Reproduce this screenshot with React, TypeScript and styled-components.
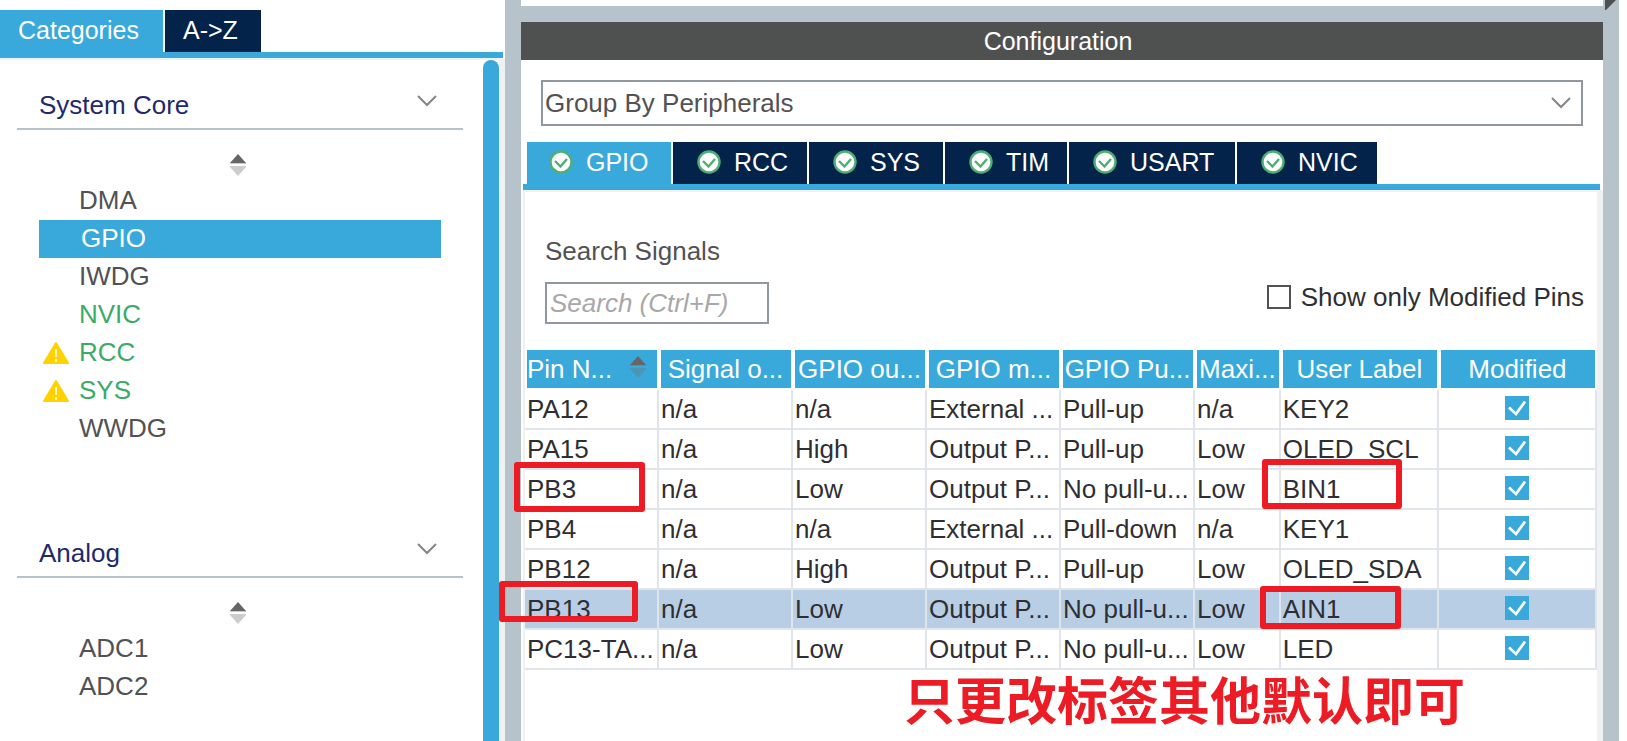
import React from 'react';
import styled, { createGlobalStyle, css } from 'styled-components';

const blue = '#39a9dc';
const navy = '#03234b';
const splitter = '#b7c3ca';
const frame = '#f0f1f2';
const grid = '#e1e4e8';
const red = '#ed1c24';

const Global = createGlobalStyle`
  *, *::before, *::after { box-sizing: border-box; }
  html, body { margin: 0; }
  body, button, input, select {
    font-family: "Liberation Sans", Arial, sans-serif;
    font-size: 26px;
    line-height: 38px;
  }
  button, input, select { margin: 0; padding: 0; border: 0; border-radius: 0; background: none; }
`;

const Window = styled.div`
  display: flex;
  height: 100vh;
  overflow: hidden;
  position: relative;
  background: #fff;
  color: #2f2f33;
`;

const Sidebar = styled.aside`
  flex: 0 0 505px;
  display: flex;
  flex-direction: column;
  padding-top: 10px;
`;

const SideTabs = styled.div`
  display: flex;
  gap: 2px;
  margin-right: 2px;
  border-bottom: 6px solid ${blue};
`;

const Tab = styled.button<{ $active?: boolean; $width: number }>`
  display: flex;
  align-items: center;
  gap: 13px;
  width: ${(p) => p.$width}px;
  height: 42px;
  padding: 0 0 2px 18px;
  color: #fff;
  font-size: 25px;
  background: ${(p) => (p.$active ? blue : navy)};
`;

const PinTab = styled(Tab)`
  padding-left: ${(p) => (p.$active ? 22 : 24)}px;
`;

const SideBody = styled.div`
  flex: 1;
  min-height: 0;
  display: flex;
  border-top: 2px solid ${frame};
  border-right: 6px solid ${frame};
`;

const Tree = styled.div`
  flex: 1;
  padding: 20px 20px 0 17px;
`;

const ScrollThumb = styled.div`
  width: 16px;
  background: ${blue};
  border-radius: 8px 8px 0 0;
`;

const Section = styled.section`
  height: 448px;
`;

const SectionHead = styled.button`
  display: flex;
  justify-content: space-between;
  width: 100%;
  height: 50px;
  padding: 6px 26px 0 22px;
  border-bottom: 2px solid ${splitter};
  color: #1f2a6b;
  line-height: 38px;
  svg { margin-top: 9px; }
`;

const SortButton = styled.button`
  display: flex;
  justify-content: center;
  width: 100%;
  height: 52px;
  padding: 24px 4px 0 0;
`;

const List = styled.ul`
  margin: 0 22px;
  padding: 0;
  list-style: none;
`;

type Tone = 'plain' | 'green' | 'selected';

const Item = styled.li<{ $tone: Tone }>`
  display: flex;
  align-items: center;
  height: 38px;
  padding-bottom: 2px;
  color: #525254;
  ${(p) => p.$tone === 'green' && css`color: #3cab67;`}
  ${(p) => p.$tone === 'selected' && css`color: #fff; background: ${blue}; padding-left: 2px;`}
`;

const ItemIcon = styled.span`
  display: flex;
  flex: 0 0 40px;
  padding: 2px 0 0 4px;
`;

const Splitter = styled.div`
  flex: 0 0 16px;
  background: ${splitter};
`;

const Main = styled.main`
  flex: 1;
  min-width: 0;
  display: flex;
  flex-direction: column;
  border-top: 6px solid #fff;
`;

const Title = styled.h1`
  margin: 0;
  height: 54px;
  border-top: 16px solid ${splitter};
  background: #4f5150;
  color: #fff;
  font-size: 25px;
  font-weight: 400;
  line-height: 38px;
  text-align: center;
  padding-right: 8px;
`;

const GroupBox = styled.div`
  position: relative;
  margin: 20px 20px 16px;
  svg { position: absolute; right: 12px; top: 17px; pointer-events: none; }
`;

const GroupSelect = styled.select`
  appearance: none;
  display: block;
  width: 100%;
  height: 46px;
  padding: 0 2px;
  border: 2px solid #90979d;
  color: #525254;
`;

const PinTabs = styled.div`
  display: flex;
  gap: 2px;
  margin: 0 3px 0 2px;
  padding-left: 4px;
  border-bottom: 6px solid ${blue};
`;

const PinBody = styled.div`
  flex: 1;
  margin-left: 2px;
  border: solid ${frame};
  border-width: 2px 6px 0 2px;
`;

const Filters = styled.div`
  display: flex;
  justify-content: space-between;
  align-items: flex-end;
  padding: 40px 13px 0 20px;
  height: 132px;
  margin-bottom: 26px;
`;

const SearchField = styled.div`
  display: flex;
  flex-direction: column;
  gap: 12px;
  color: #525254;
`;

const SearchInput = styled.input`
  width: 224px;
  height: 42px;
  padding: 0 3px;
  border: 2px solid #90979d;
  color: #525254;
  &::placeholder { color: #a8a8a8; font-style: italic; opacity: 1; }
`;

const CheckLabel = styled.label`
  display: flex;
  align-items: center;
  gap: 10px;
  margin-bottom: 8px;
`;

const Check = styled.input`
  appearance: none;
  flex: none;
  display: block;
  width: 24px;
  height: 24px;
  border: 2px solid #525254;
  &:checked {
    margin: 0 auto;
    border: 0;
    background: ${blue} url("data:image/svg+xml,%3Csvg xmlns='http://www.w3.org/2000/svg' viewBox='0 0 24 24'%3E%3Cpath d='M4 11.5l7 6.5L20 5.5' fill='none' stroke='white' stroke-width='2.8'/%3E%3C/svg%3E");
  }
`;

const PinTable = styled.table`
  width: 100%;
  table-layout: fixed;
  border-collapse: separate;
  border-spacing: 0;
  white-space: nowrap;
`;

const Th = styled.th`
  height: 40px;
  padding: 0 2px 2px;
  font-weight: 400;
  overflow: hidden;
`;

const HeadFill = styled.div<{ $sorted?: boolean }>`
  display: flex;
  align-items: center;
  justify-content: ${(p) => (p.$sorted ? 'space-between' : 'center')};
  height: 38px;
  padding: ${(p) => (p.$sorted ? '0 10px 0 0' : '0 1px 0 0')};
  background: ${blue};
  color: #fff;
  svg { margin-bottom: 4px; }
`;

const Row = styled.tr<{ $selected?: boolean }>`
  background: ${(p) => (p.$selected ? '#b8cee5' : '#fff')};
`;

const Td = styled.td`
  height: 40px;
  padding: 0 0 0 2px;
  border: solid ${grid};
  border-width: 0 2px 2px 0;
  line-height: 38px;
  overflow: hidden;
`;

const CheckTd = styled(Td)`
  padding: 0 0 2px;
`;

const Marker = styled.div<{ $x: number; $y: number; $w: number; $h: number }>`
  position: absolute;
  left: ${(p) => p.$x}px;
  top: ${(p) => p.$y}px;
  width: ${(p) => p.$w}px;
  height: ${(p) => p.$h}px;
  border: 6px solid ${red};
  border-radius: 3px;
  pointer-events: none;
`;

const Note = styled.p`
  position: absolute;
  left: 904px;
  top: 668px;
  margin: 0;
  color: ${red};
  font: 700 51px/60px "Noto Sans CJK SC", sans-serif;
  white-space: nowrap;
`;

const Margin = styled.div`
  flex: 0 0 8px;
`;

const CornerArrow = styled.svg`
  position: absolute;
  right: 11px;
  top: 0;
`;

const Chevron = () => (
  <svg width="20" height="12" viewBox="0 0 20 12" aria-hidden="true">
    <path d="M1 1l9 9 9-9" fill="none" stroke="#858585" strokeWidth="2" />
  </svg>
);

const SortIcon = ({ down = '#cdcdcd' }: { down?: string }) => (
  <svg width="18" height="22" viewBox="0 0 18 22" aria-hidden="true">
    <path d="M9 0l8 9H1z" fill="#666" />
    <path d="M1 13h16l-8 9z" fill={down} />
    <path d="M1 9.5h16M1 12.5h16" stroke={down} strokeWidth="1" />
  </svg>
);

const Warning = () => (
  <svg width="26" height="22" viewBox="0 0 26 22" role="img" aria-label="Warning">
    <path d="M13 1L25 21H1z" fill="#ffd200" stroke="#ffd200" strokeWidth="2" strokeLinejoin="round" />
    <path d="M13 7v8M13 17v3" stroke="#fff4c0" strokeWidth="2" />
  </svg>
);

const Tick = () => (
  <svg width="24" height="24" viewBox="0 0 24 24" aria-hidden="true">
    <circle cx="12" cy="12" r="10.5" fill="#fff" stroke="#4db072" strokeWidth="2.4" />
    <path d="M6 11l5.5 5.5L18 9" fill="none" stroke="#4db072" strokeWidth="2.4" />
  </svg>
);

interface Entry { name: string; tone?: Tone; warn?: boolean }

const sections: { title: string; items: Entry[] }[] = [
  {
    title: 'System Core',
    items: [
      { name: 'DMA' },
      { name: 'GPIO', tone: 'selected' },
      { name: 'IWDG' },
      { name: 'NVIC', tone: 'green' },
      { name: 'RCC', tone: 'green', warn: true },
      { name: 'SYS', tone: 'green', warn: true },
      { name: 'WWDG' },
    ],
  },
  { title: 'Analog', items: [{ name: 'ADC1' }, { name: 'ADC2' }] },
];

const pinTabs: [string, number][] = [
  ['GPIO', 144], ['RCC', 134], ['SYS', 134], ['TIM', 122], ['USART', 166], ['NVIC', 140],
];

const columns: [string, string][] = [
  ['Pin N...', '12.5%'], ['Signal o...', '12.5%'], ['GPIO ou...', '12.5%'], ['GPIO m...', '12.5%'],
  ['GPIO Pu...', '12.5%'], ['Maxi...', '8%'], ['User Label', '14.75%'], ['Modified', '14.75%'],
];

const rows = [
  ['PA12', 'n/a', 'n/a', 'External ...', 'Pull-up', 'n/a', 'KEY2'],
  ['PA15', 'n/a', 'High', 'Output P...', 'Pull-up', 'Low', 'OLED_SCL'],
  ['PB3', 'n/a', 'Low', 'Output P...', 'No pull-u...', 'Low', 'BIN1'],
  ['PB4', 'n/a', 'n/a', 'External ...', 'Pull-down', 'n/a', 'KEY1'],
  ['PB12', 'n/a', 'High', 'Output P...', 'Pull-up', 'Low', 'OLED_SDA'],
  ['PB13', 'n/a', 'Low', 'Output P...', 'No pull-u...', 'Low', 'AIN1'],
  ['PC13-TA...', 'n/a', 'Low', 'Output P...', 'No pull-u...', 'Low', 'LED'],
];

export default function App() {
  return (
    <Window>
      <Global />
      <Sidebar>
        <SideTabs>
          <Tab $active $width={163}>Categories</Tab>
          <Tab $width={96}>A-&gt;Z</Tab>
        </SideTabs>
        <SideBody>
          <Tree>
            {sections.map((section) => (
              <Section key={section.title}>
                <SectionHead>{section.title}<Chevron /></SectionHead>
                <SortButton aria-label={`Sort ${section.title}`}><SortIcon /></SortButton>
                <List>
                  {section.items.map((item) => (
                    <Item key={item.name} $tone={item.tone ?? 'plain'}>
                      <ItemIcon>{item.warn && <Warning />}</ItemIcon>
                      {item.name}
                    </Item>
                  ))}
                </List>
              </Section>
            ))}
          </Tree>
          <ScrollThumb />
        </SideBody>
      </Sidebar>
      <Splitter />
      <Main>
        <Title>Configuration</Title>
        <GroupBox>
          <GroupSelect aria-label="Grouping" defaultValue="peripherals">
            <option value="peripherals">Group By Peripherals</option>
          </GroupSelect>
          <Chevron />
        </GroupBox>
        <PinTabs>
          {pinTabs.map(([name, width], i) => (
            <PinTab key={name} $active={i === 0} $width={width}><Tick />{name}</PinTab>
          ))}
        </PinTabs>
        <PinBody>
          <Filters>
            <SearchField>
              <label htmlFor="search">Search Signals</label>
              <SearchInput id="search" placeholder="Search (Ctrl+F)" />
            </SearchField>
            <CheckLabel><Check type="checkbox" />Show only Modified Pins</CheckLabel>
          </Filters>
          <PinTable>
            <colgroup>{columns.map(([name, width]) => <col key={name} width={width} />)}</colgroup>
            <thead>
              <tr>
                {columns.map(([name], i) => (
                  <Th key={name}>
                    <HeadFill $sorted={i === 0}>{name}{i === 0 && <SortIcon down="#4d95b8" />}</HeadFill>
                  </Th>
                ))}
              </tr>
            </thead>
            <tbody>
              {rows.map((row) => (
                <Row key={row[0]} $selected={row[0] === 'PB13'}>
                  {row.map((cell, i) => <Td key={i}>{cell}</Td>)}
                  <CheckTd><Check type="checkbox" defaultChecked aria-label={`${row[0]} modified`} /></CheckTd>
                </Row>
              ))}
            </tbody>
          </PinTable>
        </PinBody>
      </Main>
      <Splitter />
      <Margin />
      <CornerArrow width="11" height="10" viewBox="0 0 11 10"><path d="M0 0h11L1 10H0z" fill="#4f5150" /></CornerArrow>
      <Marker $x={514} $y={462} $w={131} $h={50} />
      <Marker $x={499} $y={581} $w={139} $h={41} />
      <Marker $x={1262} $y={459} $w={140} $h={50} />
      <Marker $x={1260} $y={586} $w={141} $h={43} />
      <Note>只更改标签其他默认即可</Note>
    </Window>
  );
}
